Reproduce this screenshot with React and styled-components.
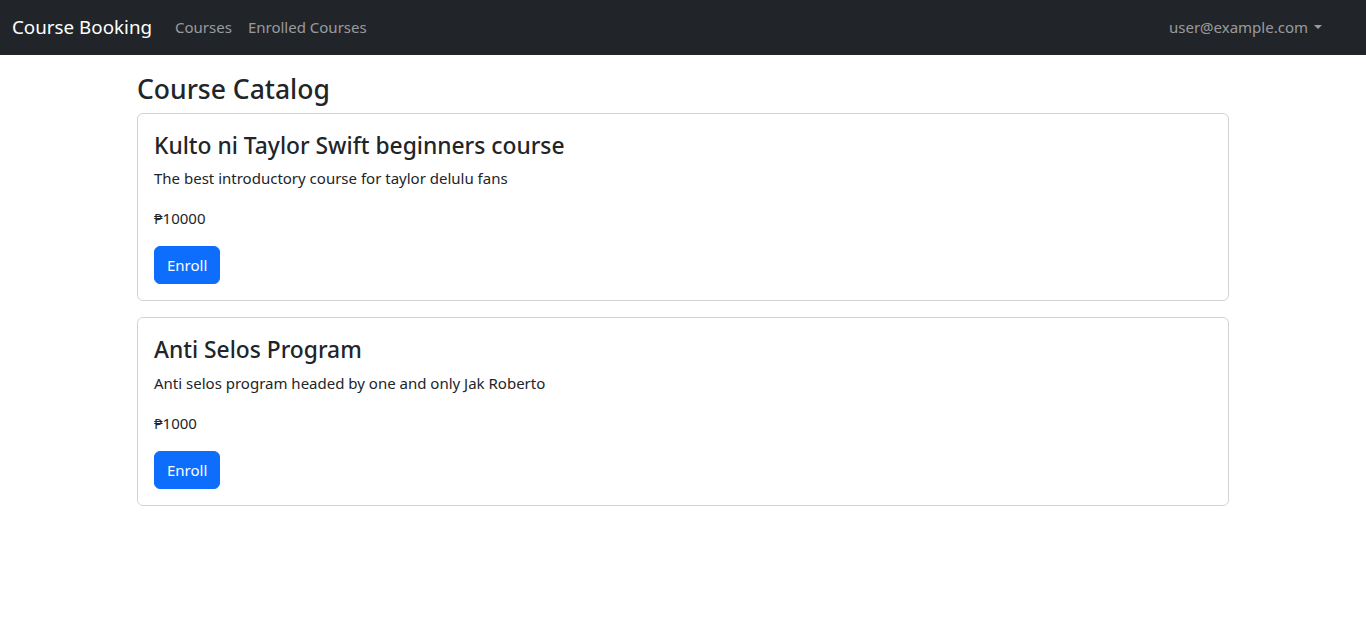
import React from "react";
import styled, { createGlobalStyle } from "styled-components";

const courses = [
    {
        id: 1,
        name: "Kulto ni Taylor Swift beginners course",
        description: "The best introductory course for taylor delulu fans",
        price: 10000,
    },
    {
        id: 2,
        name: "Anti Selos Program",
        description: "Anti selos program headed by one and only Jak Roberto",
        price: 1000,
    },
];

const GlobalStyle = createGlobalStyle`
    * {
        box-sizing: border-box;
    }
    body {
        margin: 0;
        font-family: "Noto Sans", "Open Sans", sans-serif;
        font-size: 15px;
        line-height: 24px;
        color: #212529;
        background: #ffffff;
    }
`;

const App = () => {
    return (
        <>
            <GlobalStyle />
            <Navbar>
                <Brand href="#">Course Booking</Brand>
                <NavLinks>
                    <NavLink href="#">Courses</NavLink>
                    <NavLink href="#">Enrolled Courses</NavLink>
                </NavLinks>
                <UserMenu href="#">user@example.com</UserMenu>
            </Navbar>
            <Main>
                <Heading>Course Catalog</Heading>
                {courses.map((course) => (
                    <Card key={course.id}>
                        <CardTitle>{course.name}</CardTitle>
                        <CardText>{course.description}</CardText>
                        <CardText>₱{course.price}</CardText>
                        <Button>Enroll</Button>
                    </Card>
                ))}
            </Main>
        </>
    );
};

const Navbar = styled.nav`
    display: flex;
    align-items: center;
    height: 55px;
    padding: 0 36px 0 12px;
    background-color: #212529;
`;

const Brand = styled.a`
    font-size: 18.8px;
    line-height: 30px;
    color: #ffffff;
    text-decoration: none;
    margin-right: 15px;
    margin-top: -1px;
`;

const NavLinks = styled.div`
    display: flex;
    margin-top: -1px;
`;

const NavLink = styled.a`
    padding: 8px;
    font-size: 15px;
    color: rgba(255, 255, 255, 0.55);
    text-decoration: none;
`;

const UserMenu = styled(NavLink)`
    margin-left: auto;
    margin-top: -1px;

    &::after {
        content: "";
        display: inline-block;
        margin-left: 0.4em;
        vertical-align: 0.255em;
        border-top: 0.3em solid;
        border-right: 0.3em solid transparent;
        border-left: 0.3em solid transparent;
    }
`;

const Main = styled.main`
    width: 1092px;
    margin: 0 auto;
    padding-top: 16px;
`;

const Heading = styled.h3`
    margin: 0 0 6px;
    padding-top: 2px;
    font-size: 26.5px;
    font-weight: 500;
    line-height: 33.6px;
`;

const Card = styled.div`
    display: flex;
    flex-direction: column;
    align-items: flex-start;
    padding: 16px;
    margin-bottom: 16px;
    border: 1px solid rgba(0, 0, 0, 0.175);
    border-radius: 6px;
`;

const CardTitle = styled.h4`
    margin: 0 0 6px;
    padding-top: 2px;
    font-size: 22.8px;
    font-weight: 500;
    line-height: 28.8px;
`;

const CardText = styled.p`
    margin: 0 0 16px;
`;

const Button = styled.button`
    height: 38px;
    padding: 6px 12px;
    font-family: inherit;
    font-size: 15px;
    color: #ffffff;
    background-color: #0d6efd;
    border: 1px solid #0d6efd;
    border-radius: 6px;
    cursor: pointer;
`;

export default App;
